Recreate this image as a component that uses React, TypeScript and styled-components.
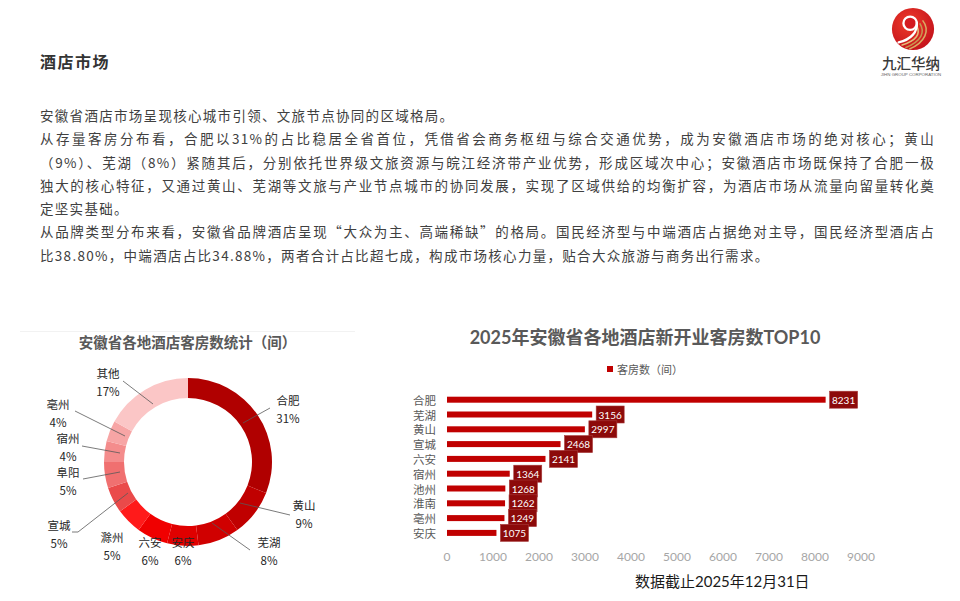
import React from "react";
import styled, { createGlobalStyle } from "styled-components";

const GlobalStyle = createGlobalStyle`
  html, body {
    margin: 0;
    padding: 0;
    background: #ffffff;
  }
  body {
    font-family: "Noto Sans CJK SC", "Noto Sans", sans-serif;
  }
`;

type Slice = { name: string; pct: number; color: string };

const slices: Slice[] = [
  { name: "合肥", pct: 31, color: "#b00000" },
  { name: "黄山", pct: 9, color: "#c00000" },
  { name: "芜湖", pct: 8, color: "#d00000" },
  { name: "安庆", pct: 6, color: "#e00000" },
  { name: "六安", pct: 6, color: "#f00000" },
  { name: "滁州", pct: 5, color: "#ff1a1a" },
  { name: "宣城", pct: 5, color: "#ea4a4a" },
  { name: "阜阳", pct: 5, color: "#f07070" },
  { name: "宿州", pct: 4, color: "#f48c8c" },
  { name: "亳州", pct: 4, color: "#f7a5a5" },
  { name: "其他", pct: 17, color: "#fbc6c6" },
];

// label centre (name line) and leader line, in donut svg coordinates
const pieLabels: { name: string; pct: string; x: number; y: number; line?: number[] }[] = [
  { name: "合肥", pct: "31%", x: 268, y: 48, line: [223, 71, 250, 56] },
  { name: "黄山", pct: "9%", x: 284, y: 153, line: [220, 151, 270, 163] },
  { name: "芜湖", pct: "8%", x: 249, y: 190, line: [192, 171, 230, 198] },
  { name: "安庆", pct: "6%", x: 163, y: 190 },
  { name: "六安", pct: "6%", x: 130, y: 190 },
  { name: "滁州", pct: "5%", x: 92, y: 185 },
  { name: "宣城", pct: "5%", x: 39, y: 173, line: [108, 141, 58, 180, 52, 180] },
  { name: "阜阳", pct: "5%", x: 48, y: 120, line: [100, 120, 63, 127] },
  { name: "宿州", pct: "4%", x: 48, y: 86, line: [100, 101, 62, 94] },
  { name: "亳州", pct: "4%", x: 38, y: 52, line: [105, 84, 55, 59] },
  { name: "其他", pct: "17%", x: 88, y: 21, line: [133, 52, 103, 29] },
];

const bars = [
  { city: "合肥", value: 8231 },
  { city: "芜湖", value: 3156 },
  { city: "黄山", value: 2997 },
  { city: "宣城", value: 2468 },
  { city: "六安", value: 2141 },
  { city: "宿州", value: 1364 },
  { city: "池州", value: 1268 },
  { city: "淮南", value: 1262 },
  { city: "亳州", value: 1249 },
  { city: "安庆", value: 1075 },
];

const CX = 168;
const CY = 110;
const R_OUT = 84;
const R_IN = 64;

const pt = (r: number, a: number) => {
  const rad = (a * Math.PI) / 180;
  return [CX + r * Math.sin(rad), CY - r * Math.cos(rad)];
};

const arcPath = (a0: number, a1: number) => {
  const large = a1 - a0 > 180 ? 1 : 0;
  const [x0, y0] = pt(R_OUT, a0);
  const [x1, y1] = pt(R_OUT, a1);
  const [x2, y2] = pt(R_IN, a1);
  const [x3, y3] = pt(R_IN, a0);
  return `M${x0} ${y0} A${R_OUT} ${R_OUT} 0 ${large} 1 ${x1} ${y1} L${x2} ${y2} A${R_IN} ${R_IN} 0 ${large} 0 ${x3} ${y3} Z`;
};

const X0 = 47;
const SCALE = 0.046;
const ROW0 = 22.7;
const STEP = 14.8;

const Emblem = () => (
  <svg width="46" height="46" viewBox="0 0 48 48">
    <defs>
      <radialGradient id="lg" cx="40%" cy="35%" r="70%">
        <stop offset="0%" stopColor="#ee3a2a" />
        <stop offset="100%" stopColor="#c3121b" />
      </radialGradient>
    </defs>
    <circle cx="24" cy="24" r="22" fill="url(#lg)" />
    <path d="M34 15 C42 25 37 38 20 45" stroke="#d9ab63" strokeWidth="1.6" fill="none" />
    <path d="M31 18 C37 27 33 37 16 43.5" stroke="#c89450" strokeWidth="1.6" fill="none" />
    <path d="M28 21 C32 29 28 36 12 41" stroke="#e2bd7a" strokeWidth="1.6" fill="none" />
    <circle cx="21" cy="18" r="7" fill="#d41a20" stroke="#ffffff" strokeWidth="2.4" />
    <path d="M28 17 C29 27 22 35 9 38" stroke="#ffffff" strokeWidth="2.4" fill="none" strokeLinecap="round" />
  </svg>
);

const App: React.FC = () => {
  let acc = 0;
  return (
    <Page>
      <GlobalStyle />
      <Header>
        <SectionTitle>酒店市场</SectionTitle>
        <Logo>
          <Emblem />
          <LogoName>九汇华纳</LogoName>
          <LogoSub>JIHN GROUP CORPORATION</LogoSub>
        </Logo>
      </Header>

      <Body>
        <Line $last>安徽省酒店市场呈现核心城市引领、文旅节点协同的区域格局。</Line>
        <Line>从存量客房分布看，合肥以31%的占比稳居全省首位，凭借省会商务枢纽与综合交通优势，成为安徽酒店市场的绝对核心；黄山</Line>
        <Line>（9%）、芜湖（8%）紧随其后，分别依托世界级文旅资源与皖江经济带产业优势，形成区域次中心；安徽酒店市场既保持了合肥一极</Line>
        <Line>独大的核心特征，又通过黄山、芜湖等文旅与产业节点城市的协同发展，实现了区域供给的均衡扩容，为酒店市场从流量向留量转化奠</Line>
        <Line $last>定坚实基础。</Line>
        <Line>从品牌类型分布来看，安徽省品牌酒店呈现“大众为主、高端稀缺”的格局。国民经济型与中端酒店占据绝对主导，国民经济型酒店占</Line>
        <Line $last>比38.80%，中端酒店占比34.88%，两者合计占比超七成，构成市场核心力量，贴合大众旅游与商务出行需求。</Line>
      </Body>

      <Charts>
        <PieCard>
          <PieTitle>安徽省各地酒店客房数统计（间）</PieTitle>
          <svg width="335" height="225" viewBox="0 0 335 225">
            {slices.map((s) => {
              const a0 = acc * 3.6;
              acc += s.pct;
              const a1 = acc * 3.6;
              return <path key={s.name} d={arcPath(a0, a1)} fill={s.color} />;
            })}
            {pieLabels.map((l) => (
              <g key={l.name}>
                {l.line && (
                  <polyline
                    points={l.line.join(" ")}
                    fill="none"
                    stroke="#595959"
                    strokeWidth="0.8"
                  />
                )}
                <PieText x={l.x} y={l.y}>{l.name}</PieText>
                <PieText x={l.x} y={l.y + 18}>{l.pct}</PieText>
              </g>
            ))}
          </svg>
        </PieCard>

        <BarCard>
          <BarTitle>2025年安徽省各地酒店新开业客房数TOP10</BarTitle>
          <Legend>
            <Swatch />
            客房数（间）
          </Legend>
          <svg width="490" height="189" viewBox="0 0 490 189">
            {bars.map((b, i) => {
              const cy = ROW0 + i * STEP;
              const w = b.value * SCALE;
              return (
                <g key={b.city}>
                  <CatText x={36} y={cy}>{b.city}</CatText>
                  <rect x={X0} y={cy - 3} width={w} height={6} fill="#c00000" />
                </g>
              );
            })}
            {bars.map((b, i) => {
              const cy = ROW0 + i * STEP;
              const bx = X0 + b.value * SCALE + 4;
              return (
                <g key={b.city + "-v"}>
                  <rect x={bx} y={cy - 8.5} width={28} height={17} fill="#8c0a0a" stroke="#a83a3a" strokeWidth="0.6" />
                  <ValueText x={bx + 14} y={cy}>{b.value}</ValueText>
                </g>
              );
            })}
            {Array.from({ length: 10 }, (_, i) => (
              <TickText key={i} x={X0 + i * 46} y={179}>{i * 1000}</TickText>
            ))}
          </svg>
          <Note>数据截止2025年12月31日</Note>
        </BarCard>
      </Charts>
    </Page>
  );
};

export default App;

const Page = styled.div`
  width: 960px;
  height: 601px;
  box-sizing: border-box;
  padding: 6px 18px 0 40px;
  overflow: hidden;
  background: #ffffff;
`;

const Header = styled.div`
  display: flex;
  justify-content: space-between;
  align-items: flex-start;
  height: 68px;
`;

const SectionTitle = styled.div`
  margin-top: 43px;
  font-size: 16px;
  line-height: 24px;
  font-weight: 700;
  letter-spacing: 1.5px;
  color: #333333;
`;

const Logo = styled.div`
  width: 62px;
  display: flex;
  flex-direction: column;
  align-items: center;
  svg {
    display: block;
    margin-left: 4px;
  }
`;

const LogoName = styled.div`
  margin-top: 3px;
  font-size: 14.5px;
  line-height: 16px;
  font-weight: 500;
  color: #3a3a3a;
`;

const LogoSub = styled.div`
  margin-top: 1px;
  font-family: "Liberation Sans", sans-serif;
  font-size: 4.4px;
  line-height: 6px;
  color: #666666;
  white-space: nowrap;
`;

const Body = styled.div`
  margin-top: 30px;
  width: 895px;
  font-size: 13.5px;
  line-height: 23.3px;
  letter-spacing: 1.3px;
  color: #404040;
`;

const Line = styled.div<{ $last?: boolean }>`
  text-align: justify;
  text-align-last: ${(p) => (p.$last ? "left" : "justify")};
`;

const Charts = styled.div`
  display: flex;
  align-items: flex-start;
  margin-top: 58px;
  margin-left: -20px;
`;

const PieCard = styled.div`
  width: 335px;
  margin-top: 6px;
  border-top: 1px solid #f2f2f2;
  svg {
    display: block;
  }
`;

const PieTitle = styled.div`
  text-align: center;
  font-size: 14.5px;
  line-height: 20px;
  font-weight: 700;
  color: #595959;
`;

const PieText = styled.text`
  font-family: "Noto Sans CJK SC", sans-serif;
  font-size: 11.5px;
  fill: #262626;
  text-anchor: middle;
  dominant-baseline: central;
`;

const BarCard = styled.div`
  width: 490px;
  margin-left: 45px;
  svg {
    display: block;
  }
`;

const BarTitle = styled.div`
  text-align: center;
  font-family: "Lato", "Noto Sans CJK SC", sans-serif;
  font-size: 18px;
  line-height: 24px;
  font-weight: 700;
  color: #595959;
`;

const Legend = styled.div`
  margin-top: 12px;
  height: 16px;
  display: flex;
  align-items: center;
  justify-content: center;
  gap: 4px;
  font-size: 11px;
  color: #595959;
`;

const Swatch = styled.span`
  width: 6px;
  height: 6px;
  background: #c00000;
`;

const CatText = styled.text`
  font-family: "Noto Sans CJK SC", sans-serif;
  font-size: 11.5px;
  fill: #595959;
  text-anchor: end;
  dominant-baseline: central;
`;

const ValueText = styled.text`
  font-family: "Lato", sans-serif;
  font-size: 10px;
  fill: #ffffff;
  text-anchor: middle;
  dominant-baseline: central;
`;

const TickText = styled.text`
  font-family: "Lato", sans-serif;
  font-size: 12px;
  fill: #a6a6a6;
  text-anchor: middle;
  dominant-baseline: central;
`;

const Note = styled.div`
  margin-top: 5px;
  padding-left: 235px;
  font-family: "Lato", "Noto Sans CJK SC", sans-serif;
  font-size: 15px;
  line-height: 20px;
  color: #1a1a1a;
`;
